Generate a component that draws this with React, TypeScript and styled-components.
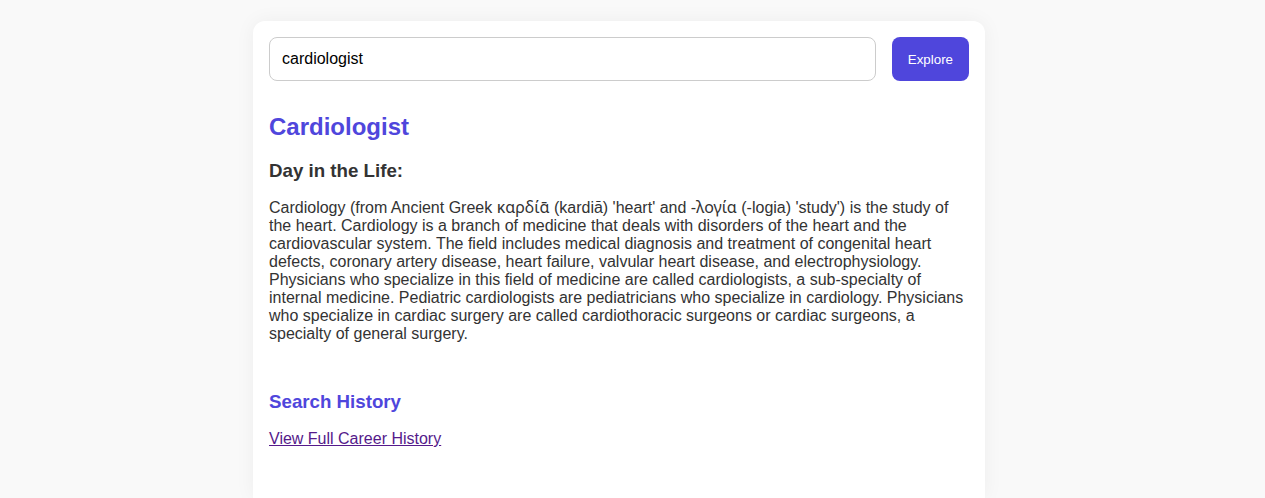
import React, { useState } from "react";
import styled, { createGlobalStyle } from "styled-components";

const GlobalStyle = createGlobalStyle`
  body {
    margin: 0;
    background: #f9f9f9;
    color: #333;
    font-family: Helvetica, "Liberation Sans", Arial, sans-serif;
    font-size: 16px;
    line-height: 18px;
  }
`;

const Page = styled.div`
  box-sizing: border-box;
  min-height: 100vh;
  display: flex;
  flex-direction: column;
  align-items: center;
  padding: 21px 27px 0 0;
`;

const Card = styled.main`
  box-sizing: border-box;
  flex: 1;
  width: 100%;
  max-width: 732px;
  padding: 16px 16px 48px;
  background: #fff;
  border-radius: 12px 12px 0 0;
  box-shadow: 0 0 20px rgba(0, 0, 0, 0.05);
`;

const SearchForm = styled.form`
  display: flex;
  gap: 16px;
  margin-bottom: 32px;
`;

const SearchInput = styled.input`
  box-sizing: border-box;
  flex: 1;
  min-width: 0;
  height: 44px;
  padding: 0 12px;
  border: 1px solid #ccc;
  border-radius: 8px;
  background: #fff;
  color: #000;
  font: inherit;
`;

const ExploreButton = styled.button`
  padding: 0 16px;
  border: 0;
  border-radius: 8px;
  background: #4f46dc;
  color: #fff;
  font-family: inherit;
  cursor: pointer;
`;

const CareerTitle = styled.h2`
  margin: 0 0 19px;
  color: #4f46dc;
  font-size: 24px;
  line-height: 28px;
`;

const SectionTitle = styled.h3<{ $accent?: boolean }>`
  margin: 0 0 17px;
  color: ${(p) => (p.$accent ? "#4f46dc" : "#333")};
  line-height: 22px;
`;

const Description = styled.p`
  margin: 0 0 48px;
`;

const Greek = styled.span`
  font-family: "Noto Sans", sans-serif;
  line-height: 1;
`;

const HistoryLink = styled.a`
  color: #551a8b;
`;

export default function App() {
  const [query, setQuery] = useState("cardiologist");
  return (
    <>
      <GlobalStyle />
      <Page>
        <Card>
          <SearchForm onSubmit={(e) => e.preventDefault()}>
            <SearchInput
              type="text"
              aria-label="Career"
              value={query}
              onChange={(e) => setQuery(e.target.value)}
            />
            <ExploreButton type="submit">Explore</ExploreButton>
          </SearchForm>
          <section>
            <CareerTitle>Cardiologist</CareerTitle>
            <SectionTitle>Day in the Life:</SectionTitle>
            <Description>
              Cardiology (from Ancient Greek <Greek lang="grc">καρδίᾱ</Greek>{" "}
              (kardiā) 'heart' and -<Greek lang="grc">λογία</Greek> (-logia)
              'study') is the study of the heart. Cardiology is a branch of
              medicine that deals with disorders of the heart and the
              cardiovascular system. The field includes medical diagnosis and
              treatment of congenital heart defects, coronary artery disease,
              heart failure, valvular heart disease, and electrophysiology.
              Physicians who specialize in this field of medicine are called
              cardiologists, a sub-specialty of internal medicine. Pediatric
              cardiologists are pediatricians who specialize in cardiology.
              Physicians who specialize in cardiac surgery are called
              cardiothoracic surgeons or cardiac surgeons, a specialty of
              general surgery.
            </Description>
          </section>
          <section>
            <SectionTitle $accent>Search History</SectionTitle>
            <HistoryLink href="#history">View Full Career History</HistoryLink>
          </section>
        </Card>
      </Page>
    </>
  );
}
